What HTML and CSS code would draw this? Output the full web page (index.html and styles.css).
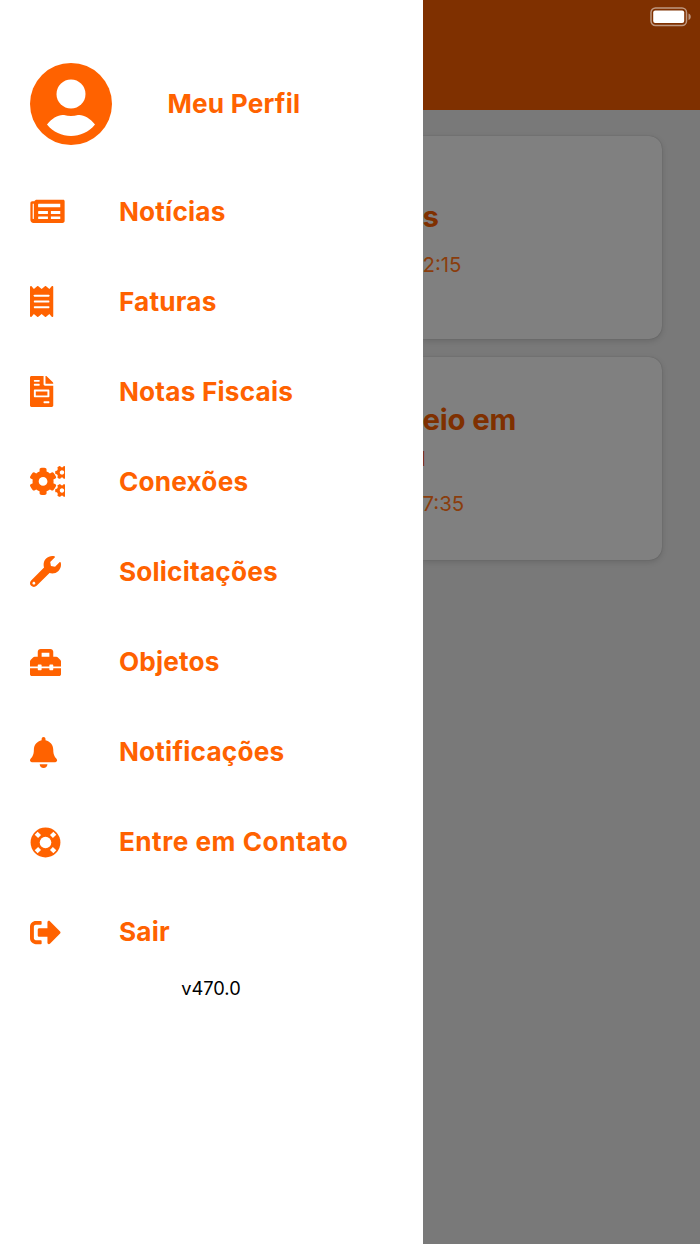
FILE: index.html
```html
<!DOCTYPE html>
<html lang="pt-BR">
<head>
<meta charset="utf-8">
<title>Menu</title>
<link rel="stylesheet" href="styles.css">
</head>
<body>
<div class="app">
  <aside class="drawer">
    <a class="profile">
      <svg class="avatar" viewBox="0 0 82 82"><circle cx="41" cy="41" r="41"/><circle class="cut" cx="41" cy="31" r="14.5"/><path class="cut" d="M17 61.5C22 55 29 51.2 34 52C38.500 53.200 43.500 53.200 48 52C53 51.200 60 55 65 61.500C59 69 50 73 41 73S23 69 17 61.500Z"/></svg>
      <span class="label">Meu Perfil</span>
    </a>
    <nav class="menu">
      <a class="item"><span class="slot"><svg class="icon" viewBox="0 0 576 512"><path fill-rule="evenodd" d="M548 62H112c-18 0-32 8-38 26H38C18 88 6 102 6 122v272c0 30 22 52 50 52h480c22 0 36-14 36-36V88c0-15-9-26-24-26ZM44 130h20v240c0 12-20 12-20 0ZM140 127h360v60H140c-8 0-8-60 0-60ZM140 248h156v48H140c-8 0-8-48 0-48ZM345 248h155v48H345ZM140 338h156v42H140c-8 0-8-42 0-42ZM345 338h155v42H345Z"/></svg></span><span class="label">Notícias</span></a>
      <a class="item"><span class="slot"><svg class="icon" viewBox="0 0 384 512"><path d="M358.400 3.200L320 48 265.600 3.200a15.900 15.900 0 0 0-19.200 0L192 48 137.600 3.200a15.900 15.900 0 0 0-19.200 0L64 48 25.600 3.200C15-4.700 0 2.800 0 16v480c0 13.200 15 20.700 25.600 12.800L64 464l54.400 44.800a15.900 15.900 0 0 0 19.200 0L192 464l54.400 44.800a15.900 15.900 0 0 0 19.200 0L320 464l38.400 44.800c10.500 7.900 25.600.4 25.600-12.800V16c0-13.300-15.100-20.700-25.600-12.800z"/><g class="cut"><rect x="64" y="144" width="256" height="32" rx="8"/><rect x="64" y="240" width="256" height="32" rx="8"/><rect x="64" y="336" width="256" height="32" rx="8"/></g></svg></span><span class="label">Faturas</span></a>
      <a class="item"><span class="slot"><svg class="icon" viewBox="0 0 384 512"><path d="M288 256H96v64h192v-64zm89-151L279.100 7c-4.500-4.500-10.600-7-17-7H256v128h128v-6.100c0-6.300-2.500-12.400-7-16.900zm-153 31V0H24C10.700 0 0 10.700 0 24v464c0 13.300 10.700 24 24 24h336c13.300 0 24-10.700 24-24V160H248c-13.200 0-24-10.800-24-24zM64 72c0-4.420 3.580-8 8-8h80c4.420 0 8 3.580 8 8v16c0 4.420-3.580 8-8 8H72c-4.420 0-8-3.580-8-8V72zm0 64c0-4.420 3.580-8 8-8h80c4.420 0 8 3.580 8 8v16c0 4.420-3.580 8-8 8H72c-4.420 0-8-3.580-8-8v-16zm256 304c0 4.420-3.580 8-8 8h-80c-4.420 0-8-3.580-8-8v-16c0-4.420 3.580-8 8-8h80c4.420 0 8 3.580 8 8v16zm0-200v96c0 8.840-7.160 16-16 16H80c-8.840 0-16-7.160-16-16v-96c0-8.840 7.160-16 16-16h224c8.840 0 16 7.160 16 16z"/></svg></span><span class="label">Notas Fiscais</span></a>
      <a class="item"><span class="slot"><svg class="icon" viewBox="0 0 576 512"><path d="M512.1 191l-8.2 14.3c-3 5.3-9.4 7.5-15.1 5.4-11.8-4.4-22.6-10.7-32.1-18.6-4.6-3.8-5.8-10.5-2.8-15.7l8.2-14.3c-6.9-8-12.3-17.3-15.9-27.4h-16.5c-6 0-11.2-4.3-12.2-10.3-2-12-2.1-24.6 0-37.1 1-6 6.2-10.4 12.2-10.4h16.5c3.6-10.1 9-19.4 15.9-27.4l-8.2-14.3c-3-5.2-1.9-11.9 2.8-15.7 9.5-7.9 20.4-14.2 32.1-18.6 5.7-2.1 12.1.1 15.1 5.4l8.2 14.3c10.5-1.9 21.2-1.9 31.7 0L552 6.3c3-5.3 9.4-7.5 15.1-5.4 11.8 4.4 22.6 10.7 32.1 18.6 4.6 3.8 5.8 10.5 2.8 15.7l-8.2 14.3c6.900 8 12.300 17.300 15.900 27.400h16.500c6 0 11.200 4.300 12.200 10.300 2 12 2.100 24.600 0 37.100-1 6-6.200 10.400-12.200 10.400h-16.500c-3.600 10.100-9 19.400-15.900 27.400l8.200 14.300c3 5.200 1.900 11.900-2.800 15.700-9.500 7.900-20.400 14.200-32.100 18.600-5.700 2.100-12.100-.1-15.100-5.400l-8.200-14.300c-10.400 1.900-21.200 1.900-31.700 0zm-10.500-58.800c38.500 29.600 82.400-14.300 52.800-52.800-38.500-29.700-82.400 14.300-52.800 52.800zM386.300 286.100l33.700 16.800c10.100 5.800 14.500 18.100 10.500 29.100-8.900 24.200-26.400 46.400-42.600 65.800-7.400 8.900-20.200 11.100-30.300 5.300l-29.100-16.800c-16 13.700-34.600 24.600-54.900 31.700v33.600c0 11.600-8.300 21.600-19.700 23.600-24.600 4.200-50.400 4.400-75.900 0-11.500-2-20-11.900-20-23.600V418c-20.300-7.200-38.900-18-54.900-31.700L74 403c-10 5.800-22.900 3.600-30.300-5.300-16.200-19.400-33.300-41.600-42.200-65.700-4-10.900.4-23.200 10.500-29.100l33.300-16.800c-3.900-20.900-3.900-42.400 0-63.400L12 205.800c-10.100-5.800-14.600-18.100-10.500-29 8.900-24.200 26-46.400 42.200-65.800 7.400-8.900 20.200-11.100 30.300-5.300l29.100 16.800c16-13.700 34.600-24.600 54.900-31.700V57.100c0-11.500 8.200-21.500 19.600-23.500 24.600-4.200 50.500-4.400 76-.1 11.500 2 20 11.900 20 23.600v33.600c20.300 7.200 38.900 18 54.900 31.700l29.100-16.800c10-5.800 22.900-3.600 30.300 5.300 16.200 19.400 33.200 41.600 42.100 65.800 4 10.900.1 23.200-10 29.100l-33.700 16.800c3.900 21 3.900 42.500 0 63.500zm-117.600 21.100c59.200-77-28.700-164.900-105.700-105.700-59.200 77 28.700 164.900 105.700 105.700zm243.400 182.700l-8.200 14.300c-3 5.300-9.400 7.500-15.100 5.400-11.800-4.400-22.600-10.700-32.100-18.600-4.600-3.800-5.800-10.500-2.800-15.700l8.200-14.300c-6.900-8-12.300-17.300-15.900-27.400h-16.500c-6 0-11.200-4.300-12.200-10.300-2-12-2.100-24.600 0-37.100 1-6 6.200-10.400 12.200-10.400h16.500c3.600-10.100 9-19.400 15.900-27.400l-8.200-14.300c-3-5.200-1.900-11.900 2.800-15.700 9.500-7.900 20.400-14.200 32.100-18.600 5.700-2.100 12.100.1 15.100 5.400l8.200 14.300c10.500-1.900 21.200-1.900 31.700 0l8.200-14.300c3-5.300 9.400-7.500 15.100-5.400 11.800 4.400 22.600 10.700 32.100 18.600 4.600 3.800 5.800 10.500 2.800 15.700l-8.200 14.300c6.900 8 12.300 17.300 15.900 27.400h16.500c6 0 11.200 4.300 12.200 10.300 2 12 2.100 24.600 0 37.100-1 6-6.200 10.400-12.200 10.400h-16.500c-3.600 10.100-9 19.400-15.900 27.400l8.200 14.300c3 5.200 1.900 11.900-2.800 15.700-9.500 7.900-20.400 14.200-32.100 18.600-5.700 2.100-12.100-.1-15.100-5.400l-8.200-14.300c-10.400 1.900-21.200 1.900-31.700 0zM501.600 431c38.500 29.600 82.400-14.300 52.800-52.800-38.500-29.600-82.400 14.300-52.800 52.800z"/></svg></span><span class="label">Conexões</span></a>
      <a class="item"><span class="slot"><svg class="icon" viewBox="0 0 512 512"><path d="M507.730 109.100c-2.240-9.030-13.540-12.090-20.120-5.510l-74.360 74.360-67.880-11.310-11.310-67.880 74.360-74.360c6.620-6.620 3.430-17.900-5.660-20.160-47.380-11.740-99.550.910-136.580 37.930-39.640 39.640-50.550 97.100-34.050 147.200L18.740 402.760c-24.990 24.990-24.990 65.510 0 90.500 24.990 24.990 65.510 24.990 90.500 0l213.210-213.210c50.120 16.710 107.470 5.680 147.370-34.220 37.070-37.070 49.700-89.320 37.910-136.730zM64 472c-13.250 0-24-10.750-24-24 0-13.260 10.750-24 24-24s24 10.740 24 24c0 13.250-10.750 24-24 24z"/></svg></span><span class="label">Solicitações</span></a>
      <a class="item"><span class="slot"><svg class="icon" viewBox="0 0 512 512"><path d="M502.630 214.630l-45.250-45.250c-6-6-14.140-9.370-22.630-9.370H384V80c0-26.510-21.490-48-48-48H176c-26.510 0-48 21.490-48 48v80H77.250c-8.490 0-16.620 3.370-22.630 9.370L9.370 214.630c-6 6-9.370 14.140-9.370 22.630V320h128v-16c0-8.840 7.160-16 16-16h32c8.840 0 16 7.160 16 16v16h128v-16c0-8.840 7.160-16 16-16h32c8.840 0 16 7.160 16 16v16h128v-82.750c0-8.480-3.370-16.620-9.370-22.620zM320 160H192V96h128v64zm64 208c0 8.840-7.160 16-16 16h-32c-8.840 0-16-7.160-16-16v-16H192v16c0 8.840-7.160 16-16 16h-32c-8.840 0-16-7.160-16-16v-16H0v96c0 17.670 14.330 32 32 32h448c17.670 0 32-14.330 32-32v-96H384v16z"/></svg></span><span class="label">Objetos</span></a>
      <a class="item"><span class="slot"><svg class="icon" viewBox="0 0 448 512"><path d="M224 512c35.320 0 63.970-28.650 63.970-64H160.030c0 35.350 28.650 64 63.970 64zm215.390-149.710c-19.320-20.760-55.470-51.990-55.470-154.290 0-77.700-54.480-139.900-127.940-155.160V32c0-17.670-14.320-32-31.980-32s-31.980 14.330-31.980 32v20.840C118.560 68.100 64.080 130.300 64.080 208c0 102.300-36.150 133.530-55.470 154.290-6 6.450-8.660 14.160-8.610 21.710.110 16.400 12.980 32 32.100 32h383.800c19.120 0 32-15.600 32.100-32 .050-7.550-2.610-15.270-8.610-21.710z"/></svg></span><span class="label">Notificações</span></a>
      <a class="item"><span class="slot"><svg class="icon" viewBox="0 0 512 512"><circle cx="256" cy="256" r="246"/><circle class="cut" cx="256" cy="256" r="96"/><path class="spokes" d="M158 158L102 102M354 158L410 102M158 354L102 410M354 354L410 410"/></svg></span><span class="label wide">Entre em Contato</span></a>
      <a class="item"><span class="slot"><svg class="icon" viewBox="0 0 512 512"><path d="M497 273L329 441c-15 15-41 4.500-41-17v-96H152c-13.300 0-24-10.700-24-24v-96c0-13.300 10.700-24 24-24h136V88c0-21.400 25.900-32 41-17l168 168c9.300 9.400 9.300 24.600 0 34zM192 436v-40c0-6.600-5.400-12-12-12H96c-17.700 0-32-14.300-32-32V160c0-17.700 14.300-32 32-32h84c6.600 0 12-5.400 12-12V76c0-6.600-5.400-12-12-12H96c-53 0-96 43-96 96v192c0 53 43 96 96 96h84c6.600 0 12-5.400 12-12z"/></svg></span><span class="label">Sair</span></a>
    </nav>
    <p class="version">v470.0</p>
  </aside>
  <main class="page">
    <header class="topbar">
      <svg class="battery" viewBox="0 0 42 20"><rect class="shell" x="1" y="1" width="35.500" height="17.500" rx="4.500"/><rect class="charge" x="3.200" y="3.500" width="31" height="12.500" rx="2"/><path class="tip" d="M38.500 6.500C41.500 7.500 41.500 12 38.500 13Z"/></svg>
    </header>
    <section class="feed">
      <article class="card"><h2 class="title">s</h2><time class="time">2:15</time></article>
      <article class="card two-line"><h2 class="title">eio em<br><span class="tail">ı</span></h2><time class="time">7:35</time></article>
    </section>
  </main>
</div>
</body>
</html>
```
FILE: styles.css
```css
* { box-sizing: border-box; }
body { margin: 0; font-family: Inter, "Liberation Sans", sans-serif; }
.app { display: flex; width: 700px; height: 1244px; overflow: hidden; background: #797979; }

.drawer { width: 422.5px; flex: none; background: #fff; padding: 62px 0 0 30.4px; color: #ff6200; }
.profile { display: flex; align-items: center; height: 83px; gap: 55px; }
.avatar { width: 82px; height: 82px; fill: #ff6200; }
.cut { fill: #fff; }
.label { font-size: 26.2px; font-weight: 680; line-height: 32px; letter-spacing: .2px; white-space: nowrap; }
.label.wide { letter-spacing: .5px; }
.menu { display: flex; flex-direction: column; padding-top: 21.5px; }
.item { display: flex; align-items: center; height: 90.1px; }
.slot { display: flex; width: 88.5px; }
.icon { height: 31px; fill: #ff6200; }
.spokes { stroke: #fff; stroke-width: 68; }
.version { margin: -1px 31px 0 0; text-align: center; color: #000; font-size: 18.3px; line-height: 24px; }

.page { flex: 1; min-width: 0; overflow: hidden; }
.topbar { display: flex; justify-content: flex-end; height: 110px; padding: 7.4px 8.5px 0 0; background: #7f3000; }
.battery { width: 42px; height: 20px; }
.shell { fill: none; stroke: #bf9880; stroke-width: 1.5; }
.charge { fill: #fff; }
.tip { fill: #bf9880; }
.feed { display: flex; flex-direction: column; gap: 18.3px; padding: 26px 38px 0 0; }
.card { height: 202.8px; padding-top: 62px; border-radius: 0 13px 13px 0; background: #808080; color: #7f3000; box-shadow: 0 0 1px rgba(0,0,0,.3), 0 2px 6px rgba(0,0,0,.14); }
.card.two-line { padding-top: 44px; }
.title { margin: 0; font-size: 29.4px; font-weight: 700; line-height: 38px; letter-spacing: -.2px; }
.time { display: block; margin-top: 17px; font-size: 20.4px; line-height: 24px; color: #8a3d0c; }
.two-line .time { margin-top: 15px; }
.tail { display: inline-block; height: 38px; vertical-align: top; font-size: 27px; line-height: 36px; font-weight: 300; margin-left: -2.5px; }
```
